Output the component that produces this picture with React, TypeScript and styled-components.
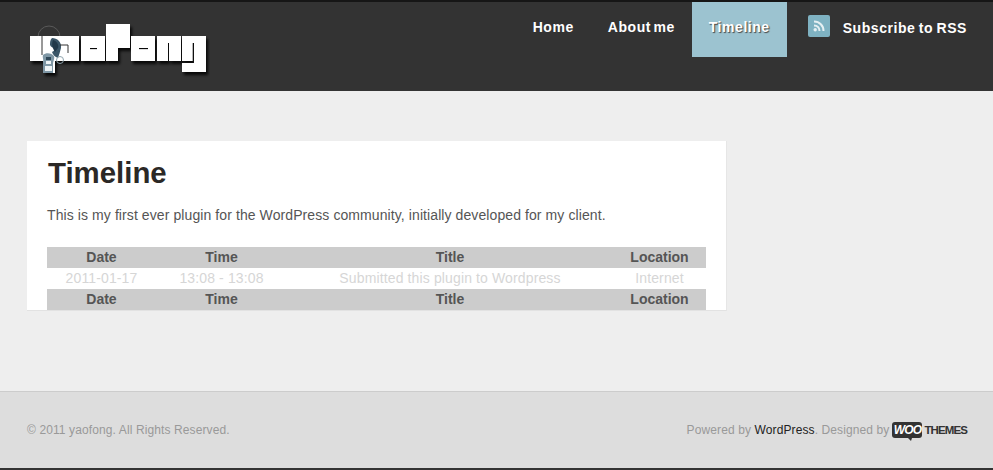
import React from "react";
import styled, { createGlobalStyle } from "styled-components";

const GlobalStyle = createGlobalStyle`
  html, body {
    margin: 0;
    padding: 0;
    background: #eeeeee;
    font-family: "Liberation Sans", Arial, sans-serif;
  }
`;

const Page = styled.div`
  width: 993px;
  height: 470px;
  display: flex;
  flex-direction: column;
  overflow: hidden;
`;

const Header = styled.header`
  height: 89px;
  flex: none;
  display: flex;
  justify-content: space-between;
  align-items: flex-start;
  background: #333333;
  border-top: 2px solid #161616;
  padding-right: 26px;
`;

const LogoLink = styled.a`
  display: block;
  margin: 22px 0 0 28px;
  line-height: 0;
`;

const Nav = styled.nav`
  display: flex;
  align-items: flex-start;
`;

const NavItem = styled.a<{ $active?: boolean }>`
  display: block;
  height: 55px;
  line-height: 51px;
  padding: 0 17px;
  font-size: 14px;
  font-weight: 700;
  letter-spacing: 0.55px;
  word-spacing: -2px;
  color: #ffffff;
  background: ${({ $active }) => ($active ? "#9cc3d0" : "transparent")};
  text-shadow: ${({ $active }) => ($active ? "1px 1px 1px #444444" : "none")};
`;

const Subscribe = styled.a`
  display: flex;
  align-items: flex-start;
  margin-left: 21px;
  padding-top: 13px;
  gap: 13px;
  font-size: 14px;
  font-weight: 700;
  letter-spacing: 0.55px;
  word-spacing: -1px;
  color: #ffffff;
  line-height: 26px;
`;

const RssBadge = styled.span`
  width: 22px;
  height: 22px;
  border-radius: 2px;
  background: #7fb2c2;
  display: flex;
  align-items: center;
  justify-content: center;
`;

const Main = styled.main`
  flex: 1;
  padding: 50px 27px 0;
  background: #eeeeee;
`;

const Card = styled.section`
  width: 700px;
  box-sizing: border-box;
  height: 170px;
  padding: 0 20px;
  background: #ffffff;
  border-bottom: 1px solid #e2e2e2;
  border-right: 1px solid #e6e6e6;
`;

const Title = styled.h1`
  margin: 0;
  padding: 15px 0 0 1px;
  font-size: 29.4px;
  line-height: 34px;
  font-weight: 700;
  color: #2b2826;
`;

const Intro = styled.p`
  margin: 17px 0 0;
  font-size: 14px;
  line-height: 16px;
  letter-spacing: 0.09px;
  color: #555555;
`;

const Table = styled.table`
  margin-top: 24px;
  width: 659px;
  border-collapse: collapse;
  table-layout: fixed;
  font-size: 14px;
`;

const Head = styled.th<{ $width: number }>`
  width: ${({ $width }) => $width}px;
  height: 21px;
  box-sizing: border-box;
  padding: 0 0 2px;
  background: #cccccc;
  color: #555555;
  font-weight: 700;
  text-align: center;
`;

const Cell = styled.td`
  height: 21px;
  box-sizing: border-box;
  padding: 0 0 2px;
  color: #d6d6d6;
  letter-spacing: 0.13px;
  text-align: center;
`;

const Footer = styled.footer`
  height: 76px;
  flex: none;
  display: flex;
  justify-content: space-between;
  align-items: center;
  padding: 0 26px 0 27px;
  background: #dddddd;
  border-top: 1px solid #cccccc;
  border-bottom: 2px solid #333333;
  font-size: 12px;
  letter-spacing: 0.11px;
  color: #999999;
`;

const Credits = styled.div`
  display: flex;
  align-items: center;
`;

const Dark = styled.a`
  color: #222222;
`;

const Woo = styled.span`
  display: flex;
  align-items: center;
  margin-left: 3px;
`;

const WooBubble = styled.span`
  position: relative;
  display: block;
  width: 30px;
  height: 16px;
  border-radius: 3px;
  background: #333333;
  color: #ffffff;
  font-size: 12px;
  line-height: 16px;
  font-weight: 700;
  font-style: italic;
  letter-spacing: -0.8px;
  text-align: center;

  &::after {
    content: "";
    position: absolute;
    left: 16px;
    bottom: -3px;
    border-top: 3px solid #333333;
    border-left: 3px solid transparent;
    border-right: 1px solid transparent;
  }
`;

const WooThemes = styled.span`
  margin-left: 2px;
  color: #333333;
  font-size: 11.5px;
  font-weight: 700;
  letter-spacing: -0.9px;
`;

// the logo is a picture of blocky letters with a swirl figure over the first ones
const Logo = () => (
  <svg width="182" height="56" viewBox="0 0 182 56">
    <defs>
      <filter id="logoShadow" x="-10%" y="-10%" width="125%" height="140%">
        <feDropShadow dx="2" dy="3" stdDeviation="1.800" floodColor="#000" floodOpacity="0.85" />
      </filter>
    </defs>
    <circle cx="21" cy="13" r="11" fill="none" stroke="#5a5a5a" strokeWidth="1" />
    <g filter="url(#logoShadow)" fill="#fff">
      <path d="M2 12h49v25H27v12H15V37H2z" />
      <path d="M53 12h24v25H53zM62 24v1.300h7V24z" fillRule="evenodd" />
      <path d="M78 0h24v24H90v13H78z" />
      <path d="M103 12h24v25h-24zM111 24v1.300h9V24z" fillRule="evenodd" />
      <path d="M129 12h24v25h-12V19h-1v18h-11z" />
      <path d="M154 12h24v36h-24V39h12V19h-1.500v18H154z" />
    </g>
    <path d="M24 14c5 0 10 4 9 10-1 4-2 7-3 10-3-1-5-3-6-6 2-1 3-2 2-4-2-1-3-1-4-3 0-3 0-5 2-7z" fill="#3a5567" />
    <path d="M25 16c4 1 6 5 5 8l-3 4c-2-3-4-7-2-12z" fill="#22394a" />
    <path d="M15 31c3-3 9-2 11 1 1 3-1 5-1 8v9H15V38c1-2-1-5 0-7z" fill="#7f97a5" />
    <path d="M18 33h5v3h-5z" fill="#2f4858" />
    <path d="M18 37h5v3h-5zM17 42h7v5h-7z" fill="#eef3f5" />
    <path d="M14 11v20M32 21h8v8" fill="none" stroke="#333" strokeWidth="1" />
    <circle cx="32" cy="36" r="3.500" fill="none" stroke="#8fa4ae" strokeWidth="1" />
  </svg>
);

const RssIcon = () => (
  <svg width="14" height="14" viewBox="0 0 14 14" fill="none" stroke="#e6f0f3" strokeWidth="2">
    <path d="M2 2.500c5.500 0 9.500 4 9.500 9.500" />
    <path d="M2 6.500c3.200 0 5.500 2.300 5.500 5.500" />
    <circle cx="3.200" cy="10.800" r="1.700" fill="#e6f0f3" stroke="none" />
  </svg>
);

const columns = [
  { label: "Date", width: 109 },
  { label: "Time", width: 131 },
  { label: "Title", width: 326 },
  { label: "Location", width: 93 },
];

const HeadRow = () => (
  <tr>
    {columns.map((c) => (
      <Head key={c.label} $width={c.width}>
        {c.label}
      </Head>
    ))}
  </tr>
);

export default function App() {
  return (
    <Page>
      <GlobalStyle />
      <Header>
        <LogoLink>
          <Logo />
        </LogoLink>
        <Nav>
          <NavItem>Home</NavItem>
          <NavItem>About me</NavItem>
          <NavItem $active>Timeline</NavItem>
          <Subscribe>
            <RssBadge>
              <RssIcon />
            </RssBadge>
            Subscribe to RSS
          </Subscribe>
        </Nav>
      </Header>
      <Main>
        <Card>
          <Title>Timeline</Title>
          <Intro>This is my first ever plugin for the WordPress community, initially developed for my client.</Intro>
          <Table>
            <thead>
              <HeadRow />
            </thead>
            <tbody>
              <tr>
                <Cell>2011-01-17</Cell>
                <Cell>13:08 - 13:08</Cell>
                <Cell>Submitted this plugin to Wordpress</Cell>
                <Cell>Internet</Cell>
              </tr>
            </tbody>
            <tfoot>
              <HeadRow />
            </tfoot>
          </Table>
        </Card>
      </Main>
      <Footer>
        <span>© 2011 yaofong. All Rights Reserved.</span>
        <Credits>
          Powered by&nbsp;<Dark>WordPress</Dark>. Designed by
          <Woo>
            <WooBubble>WOO</WooBubble>
            <WooThemes>THEMES</WooThemes>
          </Woo>
        </Credits>
      </Footer>
    </Page>
  );
}
